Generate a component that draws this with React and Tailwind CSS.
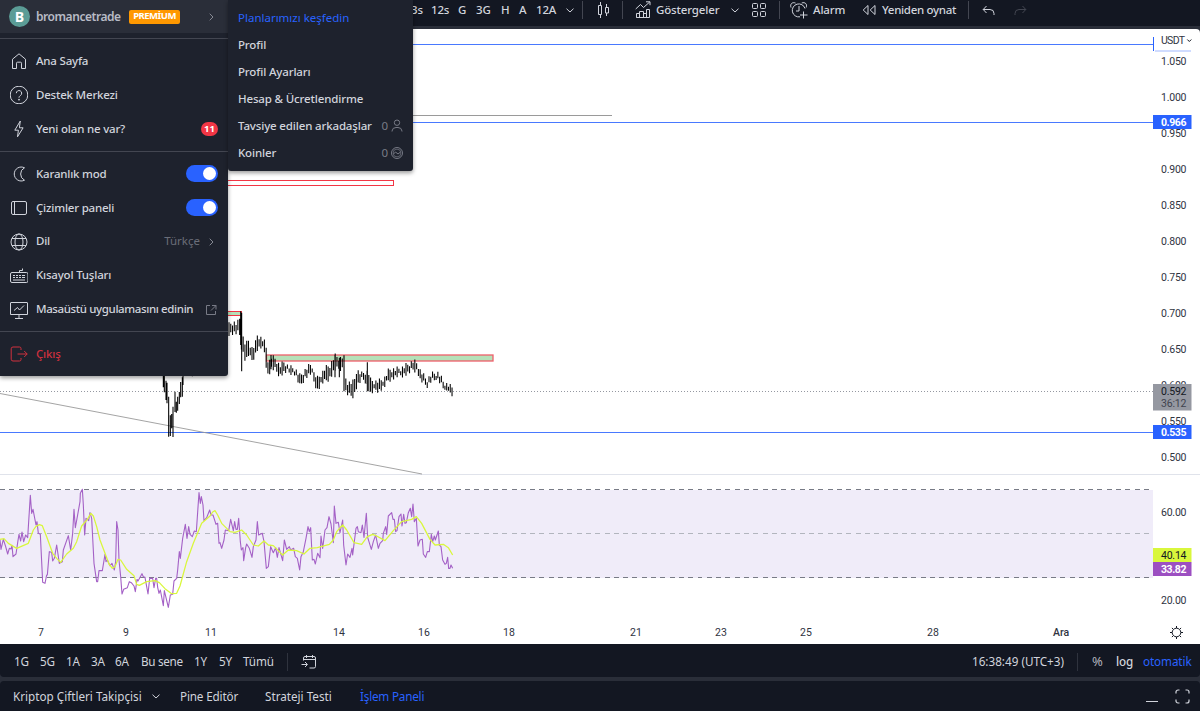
import React from "react";
import clsx from "clsx";

const priceTicks = [
  ["1.050", 61],
  ["1.000", 97],
  ["0.950", 133],
  ["0.900", 169],
  ["0.850", 205],
  ["0.800", 241],
  ["0.750", 277],
  ["0.700", 313],
  ["0.650", 349],
  ["0.600", 385],
  ["0.550", 421],
  ["0.500", 457],
  ["60.00", 512],
  ["20.00", 600],
];

const dateTicks = [
  ["7", 41],
  ["9", 126],
  ["11", 211],
  ["14", 339],
  ["16", 424],
  ["18", 509],
  ["21", 636],
  ["23", 721],
  ["25", 806],
  ["28", 933],
  ["Ara", 1061],
];

// [x, high, low] in thirds of a pixel, bars in between are interpolated
const priceShape = [
  [236, 104, 130], [250, 96, 130], [262, 102, 130], [268, 80, 128], [272, 105, 163],
  [280, 145, 190], [287, 165, 215], [295, 150, 195], [305, 175, 212], [315, 165, 195],
  [322, 135, 178], [335, 145, 172], [345, 158, 190], [350, 178, 240], [356, 225, 262],
  [362, 200, 235], [375, 205, 240], [390, 228, 255], [403, 215, 248], [415, 230, 244],
  [435, 236, 252], [450, 258, 290], [465, 240, 262], [485, 220, 250], [492, 250, 275],
  [503, 265, 300], [515, 250, 280], [525, 235, 275], [540, 225, 262], [555, 197, 240],
  [570, 205, 235], [578, 200, 235], [584, 250, 300], [590, 275, 312], [600, 278, 318],
  [612, 275, 316], [620, 240, 290], [635, 252, 270], [645, 245, 270], [655, 245, 295],
  [662, 270, 312], [675, 275, 300], [690, 272, 300], [705, 262, 288], [717, 238, 268],
  [735, 238, 262], [755, 234, 255], [775, 222, 250], [790, 213, 238], [802, 220, 242],
  [810, 240, 270], [830, 270, 288], [845, 252, 270], [865, 248, 265], [880, 275, 290],
  [895, 285, 303], [905, 292, 312], [911, 288, 306],
];

const dipBars = [
  [40, 250, 292], [43, 255, 307], [48, 272, 330], [51, 278, 340], [56, 320, 440],
  [61, 376, 438], [65, 372, 415], [69, 350, 441], [75, 305, 366], [79, 335, 368],
  [83, 320, 362], [88, 306, 342], [92, 276, 322], [97, 262, 320], [99, 250, 285],
  [127, 250, 259],
];

const spikes = [
  [272, 64, 165], [275, 68, 244], [555, 195, 262], [568, 203, 262], [582, 196, 304],
  [652, 217, 304], [363, 195, 238],
];

function buildBars() {
  const bars = [...dipBars, ...spikes];
  let seg = 0;
  let i = 0;
  for (let x = 237; x <= 911; x += 5.31) {
    while (seg < priceShape.length - 2 && priceShape[seg + 1][0] < x) seg++;
    const [x0, h0, l0] = priceShape[seg];
    const [x1, h1, l1] = priceShape[seg + 1];
    const t = (x - x0) / (x1 - x0);
    const high = h0 + (h1 - h0) * t + ((i * 7) % 5) * 4 - 7;
    const low = l0 + (l1 - l0) * t - ((i * 11) % 7) * 2.8 + 8;
    bars.push([x, high, Math.max(low, high + 12)]);
    i++;
  }
  return bars.map(([x, h, l]) => `M${x.toFixed(1)} ${h.toFixed(1)}V${l.toFixed(1)}`).join("");
}

const barPath = buildBars();

const rsi =
  "0,180 3,208 10,178 17,200 23,222 28,205 33,207 36,196 39,230 48,222 53,188 57,163 62,183 66,156 71,185 77,165 83,173 91,46 95,100 99,88 108,135 111,125 115,160 121,163 128,307 135,310 140,285 142,285 148,215 155,217 158,243 163,235 170,195 178,250 187,245 190,210 205,167 212,210 218,160 222,88 226,143 232,110 240,65 241,40 247,28 250,75 254,165 258,115 266,122 270,98 275,115 282,250 290,305 293,305 297,272 307,272 315,223 318,245 322,240 330,257 336,250 343,270 347,245 350,125 354,150 357,240 362,290 366,342 371,328 382,323 388,305 394,308 402,318 406,335 411,298 414,303 426,281 430,290 435,292 444,342 449,295 458,295 462,323 467,295 470,295 473,322 477,340 481,330 490,377 493,332 505,382 511,345 518,343 522,303 530,295 533,270 538,215 541,235 548,175 556,133 561,175 566,140 570,163 577,170 583,153 589,155 597,38 601,70 604,50 609,75 612,122 620,113 629,90 633,105 639,105 648,133 653,130 657,190 660,188 665,205 672,180 676,150 686,152 692,118 700,152 704,125 708,148 712,148 716,115 721,185 724,210 729,203 731,242 737,203 740,192 748,205 756,232 760,200 768,180 772,125 776,165 787,160 792,185 799,265 805,260 812,200 820,218 827,203 832,232 837,203 848,242 853,180 860,208 868,200 872,210 881,205 886,230 892,235 899,270 903,230 910,215 918,175 924,140 928,155 932,143 937,240 942,238 946,252 953,220 960,233 963,168 968,205 975,150 981,143 987,110 993,132 1000,188 1003,78 1008,130 1015,127 1020,158 1028,120 1031,195 1038,255 1043,222 1050,232 1056,205 1058,225 1068,145 1072,140 1075,155 1083,158 1087,135 1092,172 1099,100 1103,172 1114,208 1120,185 1127,165 1135,205 1140,190 1148,182 1150,160 1157,140 1160,163 1165,108 1175,98 1179,118 1183,118 1187,155 1191,152 1197,110 1203,102 1206,138 1211,103 1215,130 1219,128 1225,98 1231,85 1235,110 1239,72 1243,125 1249,115 1254,198 1260,180 1267,178 1270,222 1277,232 1282,215 1288,215 1294,163 1298,185 1303,168 1306,180 1315,153 1318,195 1323,200 1328,240 1335,253 1339,250 1343,232 1346,265 1350,265 1353,255 1358,265";

const rsiAverage =
  "0,178 12,176 25,190 50,205 85,190 100,150 108,139 118,134 127,137 140,170 158,220 170,235 182,247 200,222 220,205 230,185 245,138 262,118 273,100 280,108 290,140 300,180 315,220 327,252 337,265 345,260 354,238 362,240 380,268 402,287 410,313 418,316 440,305 465,302 478,308 495,326 515,341 530,340 540,318 560,245 580,190 605,130 630,108 638,96 645,92 653,105 665,130 690,155 705,157 725,150 740,165 760,195 775,198 792,183 805,195 820,197 848,225 865,210 890,212 912,222 930,205 952,203 988,193 1000,180 1010,155 1028,135 1040,150 1062,188 1085,193 1102,170 1118,163 1130,168 1155,182 1180,152 1205,125 1235,118 1249,110 1265,130 1290,178 1305,195 1330,193 1345,203 1358,225";

function Icon({ w = 18, h = 18, className, children }) {
  return (
    <svg
      width={w}
      height={h}
      viewBox={`0 0 ${w} ${h}`}
      fill="none"
      stroke="currentColor"
      className={clsx("shrink-0", className)}
    >
      {children}
    </svg>
  );
}

const Chevron = ({ className }) => (
  <Icon w={8} h={5} className={className}>
    <path d="M.5 .7 4 4 7.5 .7" />
  </Icon>
);

const ChevronSide = () => (
  <Icon w={5} h={8} className="text-[#868993]">
    <path d="M.7 .7 4 4 .7 7.3" />
  </Icon>
);

const icons = {
  home: <path d="M2.500 7.200 9 1.800l6.500 5.400V16.500H11.500V11.200a1 1 0 0 0-1-1h-3a1 1 0 0 0-1 1V16.500h-4z" />,
  help: (
    <>
      <circle cx="9" cy="9" r="8.800" />
      <path d="M6.300 7.200a2.700 2.700 0 1 1 4.300 2.200C9.500 10.200 9 10.600 9 11.700" />
      <circle cx="9" cy="13.700" r=".5" fill="currentColor" />
    </>
  ),
  bolt: <path d="M10.300 1 4.800 10.200h3.600L7.500 16.800l5.600-9H9.400z" strokeLinejoin="round" />,
  moon: <path d="M14.500 2.800A7 7 0 1 0 14.500 15.200 6.900 6.900 0 0 1 14.500 2.800z" />,
  panel: <path d="M1.500 4a1.500 1.500 0 0 1 1.500-1.500h12a1.500 1.500 0 0 1 1.500 1.500v10a1.500 1.500 0 0 1-1.500 1.500H3A1.500 1.500 0 0 1 1.500 14zM4.500 2.500v13" />,
  globe: (
    <>
      <circle cx="9" cy="9" r="8" />
      <ellipse cx="9" cy="9" rx="4" ry="8" />
      <path d="M2 5.500h14M2 12.500h14" />
    </>
  ),
  keyboard: (
    <>
      <rect x=".5" y="5.500" width="17.500" height="10" rx="1.500" />
      <path d="M9.500 5V3.500H12.500V1.500" />
      <path d="M3 8.500h2M6 8.500h2M9 8.500h2M12 8.500h3M3 10.500h2M6 10.500h2M9 10.500h2M12 10.500h3M3 13h12" strokeWidth="1.200" />
    </>
  ),
  desktop: <path d="M.5 2a.5.5 0 0 1 .5-.5h16a.5.5 0 0 1 .5.5v11.500h-17zM5 17.500h8M9 13.500v4M4 9.500 7.500 6.500l2 2.500L14 4.500" />,
  exit: <path d="M11 5V3.500A1.500 1.500 0 0 0 9.500 2H3A1.800 1.800 0 0 0 1.200 3.800v10.400A1.800 1.800 0 0 0 3 16h6.500a1.500 1.500 0 0 0 1.500-1.500V13M7.500 9h9.700M14.200 6l3 3-3 3" />,
};

function Toggle() {
  return (
    <span className="flex h-[17px] w-8 items-center justify-end rounded-full bg-[#2962ff] px-[2px]">
      <span className="size-[13px] rounded-full bg-white" />
    </span>
  );
}

function MenuRow({ icon, label, className, labelClass = "tracking-[-0.2px]", children }) {
  return (
    <div className={clsx("flex h-[33.9px] items-center pr-[10px] pl-[10px]", className)}>
      <Icon className="mr-2">{icons[icon]}</Icon>
      <span className={clsx("grow pb-[1.4px] whitespace-nowrap", labelClass)}>{label}</span>
      {children}
    </div>
  );
}

function UserMenu() {
  return (
    <div className="absolute top-0 left-0 h-[376px] w-[228px] overflow-hidden rounded-br-[3px] bg-[#1e222d] text-[11.5px] font-medium text-[#d1d4dc] shadow-[0_2px_4px_rgba(0,0,0,0.4)]">
      <div className="flex h-[33px] items-center bg-[#2a2e39] pr-[14px] pl-[9px]">
        <span className="flex size-[21px] items-center justify-center rounded-full bg-[#5b9c96] font-['Open_Sans',sans-serif] text-[14px] font-bold text-white">
          B
        </span>
        <span className="ml-[6px] w-[93px] text-[12px] font-semibold tracking-[-0.45px] whitespace-nowrap text-[#b8bbc5]">
          bromancetrade
        </span>
        <span className="flex h-[14px] w-[51px] items-center justify-center rounded-[2px] bg-[#ff9800] text-[9.5px] font-bold tracking-[-0.5px] text-white">
          PREMİUM
        </span>
        <span className="grow" />
        <ChevronSide />
      </div>
      <div className="mt-[5px] border-t border-[#434651] pt-[5.4px]">
        <MenuRow icon="home" label="Ana Sayfa" />
        <MenuRow icon="help" label="Destek Merkezi" />
        <MenuRow icon="bolt" label="Yeni olan ne var?">
          <span className="flex h-[14px] w-[17px] items-center justify-center rounded-full bg-[#f23645] text-[9.5px] font-bold text-white">
            11
          </span>
        </MenuRow>
      </div>
      <div className="mt-[4.600px] border-t border-[#434651] pt-[5.4px]">
        <MenuRow icon="moon" label="Karanlık mod">
          <Toggle />
        </MenuRow>
        <MenuRow icon="panel" label="Çizimler paneli">
          <Toggle />
        </MenuRow>
        <MenuRow icon="globe" label="Dil">
          <span className="mr-[9px] pb-[1.4px] font-normal text-[#6a6d78]">Türkçe</span>
          <span className="mr-1">
            <ChevronSide />
          </span>
        </MenuRow>
        <MenuRow icon="keyboard" label="Kısayol Tuşları" />
        <MenuRow icon="desktop" label="Masaüstü uygulamasını edinin" labelClass="tracking-[-0.38px]">
          <Icon w={12} h={12} className="mr-[1px] text-[#787b86]">
            <path d="M5 1.500H1.500v9h9V7M7 1.500h4V5.500M11 1.500 6 6.500" />
          </Icon>
        </MenuRow>
      </div>
      <div className="mt-[4.600px] border-t border-[#434651] pt-[5.4px]">
        <MenuRow icon="exit" label="Çıkış" className="text-[#cf303e]" />
      </div>
    </div>
  );
}

function ProfileMenu() {
  const row = "flex h-[27.1px] items-center whitespace-nowrap";
  return (
    <div className="absolute top-0 left-[228px] h-[171px] w-[185px] rounded-b-[3px] bg-[#1e222d] pt-[3.900px] pr-[10px] pl-[10px] text-[11.5px] font-medium tracking-[-0.15px] text-[#d1d4dc] shadow-[0_2px_4px_rgba(0,0,0,0.4)]">
      <div className={clsx(row, "font-normal tracking-[0px] text-[#2962ff]")}>Planlarımızı keşfedin</div>
      <div className={row}>Profil</div>
      <div className={row}>Profil Ayarları</div>
      <div className={row}>Hesap &amp; Ücretlendirme</div>
      <div className={row}>
        <span className="grow">Tavsiye edilen arkadaşlar</span>
        <span className="mr-[3px] font-normal text-[#787b86]">0</span>
        <Icon w={12} h={13} className="text-[#787b86]">
          <circle cx="6" cy="3.700" r="2.700" />
          <path d="M1 12.500V12a4 4 0 0 1 4-3.500h2A4 4 0 0 1 11 12v.5" />
        </Icon>
      </div>
      <div className={row}>
        <span className="grow">Koinler</span>
        <span className="mr-[3px] font-normal text-[#787b86]">0</span>
        <Icon w={12} h={12} className="text-[#787b86]">
          <circle cx="6" cy="6" r="5.500" />
          <circle cx="6" cy="6" r="3.900" strokeWidth=".7" />
          <path d="M2.500 7 4.500 5 7 7l2.500-2" />
        </Icon>
      </div>
    </div>
  );
}

function Divider({ className }) {
  return <span className={clsx("h-[18px] w-px shrink-0 bg-[#434651]", className)} />;
}

function TopToolbar() {
  return (
    <div className="flex h-[26px] items-center pb-[6px] pl-[411px] text-[11.5px] font-medium tracking-[-0.15px] whitespace-nowrap">
      <span className="w-5">3s</span>
      <span className="w-[27px]">12s</span>
      <span className="w-[18px]">G</span>
      <span className="w-[25px]">3G</span>
      <span className="w-[18px]">H</span>
      <span className="w-[17px]">A</span>
      <span className="w-[30px]">12A</span>
      <Chevron />
      <Divider className="ml-[8px]" />
      <Icon w={13} h={18} className="ml-[14px]">
        <path d="M3.500 1v3M3.500 14v3M1.500 4.500h3v9h-3zM9.500 3v3M9.500 12v3M8.500 6.500h3v5.500h-3z" />
      </Icon>
      <Divider className="ml-[12px]" />
      <Icon w={16} h={18} className="ml-[12px]">
        <path d="M.7 8 5.500 3.500 8.500 6.500 14.700 1M11 .8h4v3.400M1.500 16.500v-4h3v4zM4.500 16.500v-6h4v6M8.500 16.500v-4h3v4M11.500 16.500V8.500h3v8h-13" />
      </Icon>
      <span className="ml-[5px] w-[75px]">Göstergeler</span>
      <Chevron />
      <Icon w={16} h={16} className="ml-[12px]">
        <rect x="1.500" y="1.500" width="5" height="5" rx="1" />
        <rect x="9.500" y="1.500" width="5" height="5" rx="1" />
        <rect x="1.500" y="9.500" width="5" height="5" rx="1" />
        <rect x="9.500" y="9.500" width="5" height="5" rx="1" />
      </Icon>
      <Divider className="ml-[12px]" />
      <Icon w={18} h={18} className="ml-[10px]">
        <path d="M15 7.500A6.500 6.500 0 1 0 10 15.800M9 5v5H6M1 6.500C-.2 3 2.200.8 5.500 2M16.200 6.500C17.500 3 15 .8 11.700 2M13.500 10.500v7M10 14h7.500" />
      </Icon>
      <span className="ml-[5px] w-[49px]">Alarm</span>
      <Icon w={15} h={12}>
        <path d="M6 1.500v9L1.200 6zM13 1.500v9L8.200 6z" />
      </Icon>
      <span className="ml-[5px] w-[86px] tracking-[-0.3px]">Yeniden oynat</span>
      <Divider />
      <Icon w={13} h={11} className="ml-[13px]">
        <path d="M4.500 1 1.200 4.500 4.500 8M1.200 4.500H8A4 4 0 0 1 12 8.500V10" />
      </Icon>
      <Icon w={13} h={11} className="ml-[19px] text-[#434651]">
        <path d="M8.500 1 11.800 4.500 8.500 8M11.800 4.500H5A4 4 0 0 0 1 8.500V10" />
      </Icon>
    </div>
  );
}

function PriceTag({ y, h = 14, fill, color = "#fff", bold, children }) {
  return (
    <>
      <rect x="1153" y={y} width="38.500" height={h} fill={fill} />
      <text x="1161" y={y + 11} fill={color} fontWeight={bold ? 700 : 400} textLength="25.500">
        {children}
      </text>
    </>
  );
}

function Chart() {
  return (
    <svg
      width="1200"
      height="615"
      viewBox="0 29 1200 615"
      className="block shrink-0 rounded-tr-[4px] bg-white font-['Roboto',sans-serif] text-[10.5px]"
    >
      <g shapeRendering="crispEdges">
        <rect x="0" y="490" width="1153" height="88" fill="#f0ecf9" />
        <path d="M0 474.500H1200" stroke="#e0e3eb" />
        <path d="M0 489.500H1153M0 577.500H1153" stroke="#787b86" strokeDasharray="5 4.300" />
        <path d="M0 533.500H1153" stroke="#b2b5be" strokeDasharray="5 4.300" />
        <path d="M200 44.500H1153M200 122.500H1153M0 432.500H1153" stroke="#2962ff" strokeOpacity=".85" />
        <path d="M1153.500 37V51" stroke="#2962ff" />
        <path d="M1155 50.500H1191" stroke="#d0dcff" strokeWidth="2" />
        <path d="M200 115.500H612" stroke="#9a9a9a" />
        <path d="M0 391.500H1153" stroke="#9598a1" strokeDasharray="1 2" />
        <path d="M200 180.500H393.500V185.500H200" fill="#fff" stroke="#f23645" />
        <rect x="200.500" y="311.500" width="41" height="4" fill="#b5e0b8" stroke="#f23645" />
      </g>
      <rect x="266.500" y="355" width="226.500" height="6" fill="#b5e0b8" stroke="#ee5f6a" strokeWidth="1.300" />
      <path d="M0 393.500 422 474" stroke="#9a9a9a" strokeWidth=".9" />
      <g transform="translate(150 290) scale(.33333)" fill="none">
        <path d={barPath} stroke="#000" strokeWidth="3.200" />
      </g>
      <g transform="translate(0 480) scale(.33333)" fill="none" strokeLinejoin="round">
        <polyline points={rsi} stroke="#a461c6" strokeWidth="3.300" />
        <polyline points={rsiAverage} stroke="#d9f73c" strokeWidth="3.800" />
      </g>

      <g fill="#30343f">
        {priceTicks.map(([label, y]) => (
          <text key={label} x="1161" y={y + 4} textLength="25.500">
            {label}
          </text>
        ))}
        {dateTicks.map(([label, x]) => (
          <text key={label} x={x} y="636" textAnchor="middle" fontWeight={label === "Ara" ? 500 : 400}>
            {label}
          </text>
        ))}
        <text x="1161" y="44" textLength="24">
          USDT
        </text>
      </g>
      <path d="M1187.300 39.500 1189.300 41.500 1191.300 39.500" fill="none" stroke="#131722" />

      <PriceTag y={115} fill="#2962ff" bold>0.966</PriceTag>
      <PriceTag y={384} h={26.500} fill="#9598a1" color="#131722">0.592</PriceTag>
      <text x="1161" y="407" fill="#3f434e" textLength="25.500">36:12</text>
      <PriceTag y={425} fill="#2962ff" bold>0.535</PriceTag>
      <PriceTag y={548} fill="#d9f73c" color="#131722">40.14</PriceTag>
      <PriceTag y={562} fill="#9c4fc1" bold>33.82</PriceTag>

      <g transform="translate(1176.500 632.500)" fill="none" stroke="#131722">
        <circle r="4.300" />
        <path d="M0-4.500v-2M0 4.500v2M-4.500 0h-2M4.500 0h2M3.200-3.200l1.400-1.400M-3.200-3.200l-1.400-1.400M3.200 3.200l1.400 1.400M-3.200 3.200l-1.400 1.400" />
      </g>
    </svg>
  );
}

function RangeBar() {
  return (
    <div className="flex h-[33px] items-center rounded-b-[4px] bg-[#131722] pt-[2px] pr-[8px] pl-[14px] text-[11.7px] tracking-[-0.1px] whitespace-nowrap">
      <span className="w-[26px]">1G</span>
      <span className="w-[26px]">5G</span>
      <span className="w-[25px]">1A</span>
      <span className="w-[24px]">3A</span>
      <span className="w-[26px]">6A</span>
      <span className="w-[53px] tracking-[-0.3px]">Bu sene</span>
      <span className="w-[25px]">1Y</span>
      <span className="w-[24px]">5Y</span>
      <span className="w-[44px]">Tümü</span>
      <Divider className="opacity-60" />
      <Icon w={16} h={16} className="ml-[13px]">
        <path d="M2.500 6.500V4A1.500 1.500 0 0 1 4 2.500h9A1.500 1.500 0 0 1 14.500 4v8.500A1.500 1.500 0 0 1 13 14H8.500M2.500 5.500h12M5.500 1v3M11.500 1v3M.5 10.500H6M4 8l2.500 2.500L4 13" />
      </Icon>
      <span className="grow" />
      <span className="w-[105px] tracking-[0px]">16:38:49 (UTC+3)</span>
      <Divider className="opacity-60" />
      <span className="ml-[14px] w-[24px] text-[13px] text-[#b2b5be]">%</span>
      <span className="w-[27px] font-medium">log</span>
      <span className="w-[49px] text-[#2962ff]">otomatik</span>
    </div>
  );
}

function PanelTabs() {
  return (
    <div className="flex h-[30px] items-center rounded-t-[4px] bg-[#131722] pt-px pr-[10px] pl-[13px] text-[11.7px] whitespace-nowrap">
      <span className="w-[139px]">Kriptop Çiftleri Takipçisi</span>
      <Chevron />
      <span className="ml-[20px] w-[85px] tracking-[-0.15px]">Pine Editör</span>
      <span className="w-[95px]">Strateji Testi</span>
      <span className="tracking-[-0.2px] text-[#2962ff]">İşlem Paneli</span>
      <span className="grow" />
      <span className="mt-[10px] mr-[17px] h-px w-3 bg-[#d1d4dc]" />
      <Icon w={15} h={15}>
        <path d="M1 4.500V3a2 2 0 0 1 2-2h1.500M10.500 1H12a2 2 0 0 1 2 2v1.500M14 10.500V12a2 2 0 0 1-2 2h-1.500M4.500 14H3a2 2 0 0 1-2-2v-1.500" strokeWidth="1.200" />
      </Icon>
    </div>
  );
}

export default function App() {
  return (
    <div className="relative flex h-[711px] w-[1200px] flex-col overflow-hidden bg-[#2a2e39] font-['Noto_Sans',sans-serif] text-[#d1d4dc]">
      <div className="h-[29px] shrink-0">
        <div className="bg-[#131722]">
          <TopToolbar />
        </div>
      </div>
      <Chart />
      <RangeBar />
      <div className="h-1 shrink-0" />
      <PanelTabs />
      <UserMenu />
      <ProfileMenu />
    </div>
  );
}
